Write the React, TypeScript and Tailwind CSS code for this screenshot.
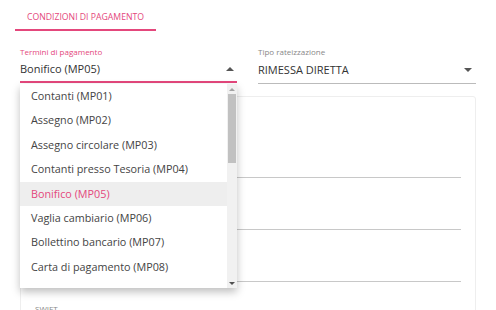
import React from "react";

const options = [
  "Contanti (MP01)",
  "Assegno (MP02)",
  "Assegno circolare (MP03)",
  "Contanti presso Tesoria (MP04)",
  "Bonifico (MP05)",
  "Vaglia cambiario (MP06)",
  "Bollettino bancario (MP07)",
  "Carta di pagamento (MP08)",
];

export default function App() {
  const selected = "Bonifico (MP05)";

  return (
    <div
      className="relative w-[496px] h-[310px] overflow-hidden bg-white text-[#333]"
      style={{ fontFamily: '"Open Sans", "Noto Sans", sans-serif' }}
    >
      {/* Tabs */}
      <div className="pl-[15px] pt-[10px]">
        <div className="w-[141px] border-b-2 border-[#e4477c] pb-[5px] text-center text-[8.7px] leading-[14px] text-[#e4477c]">
          CONDIZIONI DI PAGAMENTO
        </div>
      </div>

      {/* Select fields */}
      <div className="flex gap-[21px] px-[20px] pt-[15px]">
        <div className="w-[217px]">
          <div className="text-[8px] leading-[12px] text-[#e4477c]">Termini di pagamento</div>
          <div className="flex h-[25px] items-center justify-between border-b-2 border-[#e4477c] pb-[1px]">
            <span className="text-[11px] text-[#333]">{selected}</span>
            <span className="mr-[3px] h-0 w-0 border-x-[4px] border-b-[4px] border-x-transparent border-b-[#555]" />
          </div>
        </div>
        <div className="w-[218px]">
          <div className="text-[8px] leading-[12px] text-[#888]">Tipo rateizzazione</div>
          <div className="flex h-[26px] items-center justify-between border-b border-[#bbb] pb-[1px]">
            <span className="text-[11px] text-[#333]">RIMESSA DIRETTA</span>
            <span className="mr-[4px] h-0 w-0 border-x-[4px] border-t-[4px] border-x-transparent border-t-[#555]" />
          </div>
        </div>
      </div>

      {/* Card below */}
      <div className="mx-[20px] mt-[12px] h-[240px] rounded-[3px] border border-[#eee] px-[14px]">
        <div className="mt-[80px] border-b border-[#c8c8c8]" />
        <div className="mt-[51px] border-b border-[#c8c8c8]" />
        <div className="mt-[51px] border-b border-[#c8c8c8]" />
        <div className="mt-[21px] text-[8px] text-[#888]">SWIFT</div>
      </div>

      {/* Dropdown menu */}
      <div className="absolute left-[20px] top-[84px] flex h-[204px] w-[217px] bg-white shadow-[0_4px_8px_rgba(0,0,0,0.25)]">
        <div className="flex-1 overflow-hidden">
          {options.map((o) => (
            <div
              key={o}
              className={`flex h-[24.4px] items-center pl-[11px] text-[10.8px] ${
                o === selected ? "bg-[#eeeeee] text-[#e4477c]" : "text-[#444]"
              }`}
            >
              {o}
            </div>
          ))}
        </div>
        <div className="flex w-[10px] flex-col bg-[#f1f1f1]">
          <div className="flex h-[10px] items-center justify-center">
            <span className="h-0 w-0 border-x-[3px] border-b-[3px] border-x-transparent border-b-[#a3a3a3]" />
          </div>
          <div className="mx-[1px] h-[69px] bg-[#c1c1c1]" />
          <div className="flex-1" />
          <div className="flex h-[10px] items-center justify-center">
            <span className="h-0 w-0 border-x-[3px] border-t-[3px] border-x-transparent border-t-[#505050]" />
          </div>
        </div>
      </div>
    </div>
  );
}
